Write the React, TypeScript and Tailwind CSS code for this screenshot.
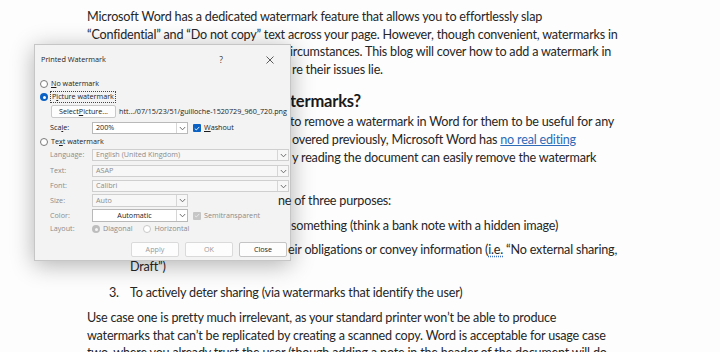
import React from 'react';

const Chevron = () => (
  <svg width="7" height="5" viewBox="0 0 7 5" className="block">
    <path d="M0.8 1 L3.5 3.8 L6.2 1" fill="none" stroke="#606060" strokeWidth="0.9" />
  </svg>
);

const Combo = ({
  value,
  width,
  enabled = false,
  center = false,
  height = 'h-[12px]',
}: {
  value: string;
  width: string;
  enabled?: boolean;
  center?: boolean;
  height?: string;
}) => (
  <div
    className={`${width} ${height} flex items-stretch border ${
      enabled ? 'border-[#b9b9b9] bg-white' : 'border-[#cfcfcf] bg-[#f7f7f7]'
    }`}
  >
    <div
      className={`flex-1 flex items-center px-[3px] ${center ? 'justify-center' : ''} ${
        enabled ? 'text-[#1c1c1c]' : 'text-[#8c8c8c]'
      }`}
    >
      {value}
    </div>
    <div className="w-[11px] flex items-center justify-center border-l border-[#d6d6d6]">
      <Chevron />
    </div>
  </div>
);

const Radio = ({ state }: { state: 'on' | 'off' | 'disabledOn' | 'disabledOff' }) => {
  if (state === 'on')
    return (
      <span className="w-[8px] h-[8px] rounded-full bg-[#0b62c4] flex items-center justify-center shrink-0">
        <span className="w-[3px] h-[3px] rounded-full bg-white" />
      </span>
    );
  if (state === 'disabledOn')
    return (
      <span className="w-[8px] h-[8px] rounded-full bg-[#bdbdbd] flex items-center justify-center shrink-0">
        <span className="w-[3px] h-[3px] rounded-full bg-[#f4f4f4]" />
      </span>
    );
  return (
    <span
      className={`w-[8px] h-[8px] rounded-full border bg-white shrink-0 ${
        state === 'off' ? 'border-[#7a7a7a]' : 'border-[#c9c9c9]'
      }`}
    />
  );
};

const Check = ({ enabled }: { enabled: boolean }) => (
  <span
    className={`w-[8px] h-[8px] rounded-[1px] flex items-center justify-center shrink-0 ${
      enabled ? 'bg-[#0b62c4]' : 'bg-[#c6c6c6]'
    }`}
  >
    <svg width="6" height="5" viewBox="0 0 6 5">
      <path d="M0.8 2.6 L2.3 4 L5.3 0.9" fill="none" stroke={enabled ? '#ffffff' : '#ececec'} strokeWidth="0.9" />
    </svg>
  </span>
);

const Btn = ({ label, enabled = false }: { label: string; enabled?: boolean }) => (
  <div
    className={`w-[48px] h-[15px] rounded-[2px] border bg-[#fdfdfd] flex items-center justify-center ${
      enabled ? 'border-[#c4c4c4] text-[#1c1c1c]' : 'border-[#dadada] text-[#9a9a9a]'
    }`}
  >
    {label}
  </div>
);

const PrintedWatermarkDialog = () => (
  <div className="absolute left-[34px] top-[44px] z-10 w-[257px] h-[217px] bg-[#f3f3f3] border border-[#c6c6c6] shadow-[0_4px_22px_rgba(0,0,0,0.3)] font-['Open_Sans',sans-serif] text-[7.2px] text-[#1c1c1c] leading-none whitespace-nowrap">
    {/* Title bar */}
    <div className="h-[30px] flex items-center pl-[6px]">
      <span className="text-[7.3px]">Printed Watermark</span>
      <span className="ml-auto mr-[43px] text-[8.5px] text-[#333]">?</span>
      <svg width="8" height="8" viewBox="0 0 8 8" className="mr-[16px]">
        <path d="M0.5 0.5 L7.5 7.5 M7.5 0.5 L0.5 7.5" stroke="#333" strokeWidth="0.8" />
      </svg>
    </div>

    <div className="pl-[5px]">
      <div className="mt-[3px] h-[12px] flex items-center gap-[2px]">
        <Radio state="off" />
        <span className="ml-[1px]">
          <u>N</u>o watermark
        </span>
      </div>
      <div className="mt-[1px] h-[12px] flex items-center gap-[2px]">
        <Radio state="on" />
        <span className="border border-dotted border-[#444] px-[1px] py-[1px]">
          P<u>i</u>cture watermark
        </span>
      </div>

      <div className="mt-[2px] h-[13px] flex items-center pl-[11px]">
        <div className="w-[65px] h-[13px] rounded-[2px] border border-[#c9c9c9] bg-[#fdfdfd] flex items-center justify-center">
          Select <u>P</u>icture...
        </div>
        <span className="ml-[3px] text-[7.2px]">htt.../07/15/23/51/guilloche-1520729_960_720.png</span>
      </div>

      <div className="mt-[4px] h-[12px] flex items-center pl-[10px]">
        <span className="w-[42px]">
          Sca<u>l</u>e:
        </span>
        <Combo value="200%" width="w-[96px]" enabled />
        <span className="ml-[5px]">
          <Check enabled />
        </span>
        <span className="ml-[3px]">
          <u>W</u>ashout
        </span>
      </div>

      <div className="mt-[2px] h-[12px] flex items-center gap-[2px]">
        <Radio state="off" />
        <span className="ml-[1px]">
          Te<u>x</u>t watermark
        </span>
      </div>

      <div className="pl-[10px] text-[#8c8c8c]">
        <div className="mt-[1px] h-[12px] flex items-center">
          <span className="w-[42px]">Language:</span>
          <Combo value="English (United Kingdom)" width="w-[197px]" />
        </div>
        <div className="mt-[4px] h-[12px] flex items-center">
          <span className="w-[42px]">Text:</span>
          <Combo value="ASAP" width="w-[197px]" />
        </div>
        <div className="mt-[3px] h-[12px] flex items-center">
          <span className="w-[42px]">Font:</span>
          <Combo value="Calibri" width="w-[197px]" />
        </div>
        <div className="mt-[2px] h-[13px] flex items-center">
          <span className="w-[42px]">Size:</span>
          <Combo value="Auto" width="w-[96px]" height="h-[13px]" />
        </div>
        <div className="mt-[2px] h-[13px] flex items-center">
          <span className="w-[42px]">Color:</span>
          <Combo value="Automatic" width="w-[96px]" height="h-[13px]" enabled center />
          <span className="ml-[5px]">
            <Check enabled={false} />
          </span>
          <span className="ml-[3px]">Semitransparent</span>
        </div>
        <div className="mt-[1px] h-[12px] flex items-center">
          <span className="w-[42px]">Layout:</span>
          <Radio state="disabledOn" />
          <span className="ml-[3px] mr-[11px]">Diagonal</span>
          <Radio state="disabledOff" />
          <span className="ml-[3px]">Horizontal</span>
        </div>
      </div>
    </div>

    <div className="mt-[7px] flex justify-end gap-[6px] pr-[3px]">
      <Btn label="Apply" />
      <Btn label="OK" />
      <Btn label="Close" enabled />
    </div>
  </div>
);

// the part of a line that sits under the dialog
const Covered = ({ w }: { w: string }) => <span className={`inline-block ${w} h-px align-top`} />;

export default function App() {
  return (
    <div className="relative w-[720px] h-[352px] overflow-hidden bg-[#fdfdfd]">
      <div className="pl-[87px] pt-[8px] font-['Lato',sans-serif] text-[12.6px] tracking-[-0.2px] leading-[17.6px] text-[#262626] whitespace-nowrap">
        <div>Microsoft Word has a dedicated watermark feature that allows you to effortlessly slap</div>
        <div>“Confidential” and “Do not copy” text across your page. However, though convenient, watermarks in</div>
        <div>
          <Covered w="w-[203px]" />
          ircumstances. This blog will cover how to add a watermark in
        </div>
        <div>
          <Covered w="w-[205px]" />
          re their issues lie.
        </div>

        <h2 className="mt-[12px] h-[22px] leading-[22px] text-[16.5px] font-bold text-[#1a1a1a]">
          <Covered w="w-[203px]" />
          termarks?
        </h2>

        <div className="mt-[1px]">
          <Covered w="w-[203px]" />
          to remove a watermark in Word for them to be useful for any
        </div>
        <div>
          <Covered w="w-[205px]" />
          overed previously, Microsoft Word has <span className="text-[#2e6bb8] underline">no real editing</span>
        </div>
        <div>
          <Covered w="w-[205px]" />
          y reading the document can easily remove the watermark
        </div>
        <div className="h-[17.6px]" />

        <div className="mt-[8px]">
          <Covered w="w-[191px]" />
          <span className="relative z-20">ne of three purposes:</span>
        </div>

        <div className="mt-[7.4px] pl-[22px]">
          <div className="flex">
            <span className="w-[21px]" />
            <span>
              <Covered w="w-[161px]" />
              <span className="relative z-20">something (think a bank note with a hidden image)</span>
            </span>
          </div>
          <div className="mt-[6.5px] flex">
            <span className="w-[21px]" />
            <span>
              <Covered w="w-[158px]" />
              <span className="relative z-20">
                eir obligations or convey information (
                <span className="underline decoration-dotted decoration-[#3a6fc4] underline-offset-2">i.e.</span> “No
                external sharing,
              </span>
              <br />
              Draft”)
            </span>
          </div>
          <div className="mt-[8px] flex">
            <span className="w-[21px]">3.</span>
            <span>To actively deter sharing (via watermarks that identify the user)</span>
          </div>
        </div>

        <div className="mt-[7.4px]">
          Use case one is pretty much irrelevant, as your standard printer won’t be able to produce
        </div>
        <div>watermarks that can’t be replicated by creating a scanned copy. Word is acceptable for usage case</div>
        <div>two, where you already trust the user (though adding a note in the header of the document will do</div>
      </div>

      <PrintedWatermarkDialog />
    </div>
  );
}
